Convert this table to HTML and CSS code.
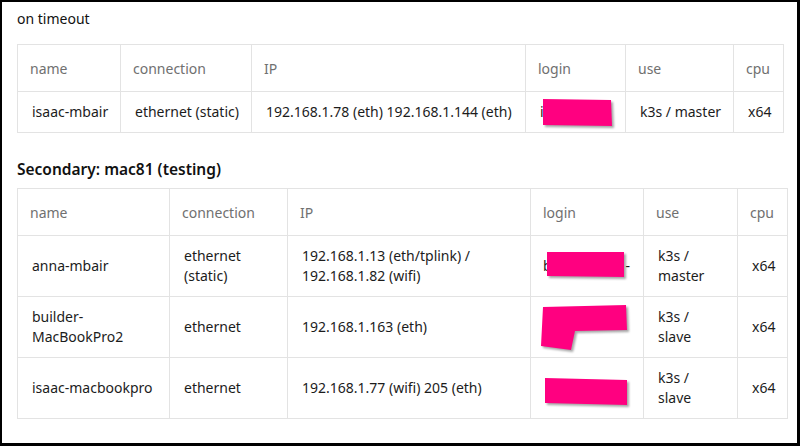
FILE: index.html
```html
<!DOCTYPE html>
<html>
<head>
<meta charset="utf-8">
<link rel="stylesheet" href="styles.css">
</head>
<body>
<div class="frame">
  <p class="intro">on timeout</p>
  <table class="grid grid-primary">
    <colgroup>
      <col class="c1a"><col class="c2a"><col class="c3a"><col class="c4a"><col class="c5a"><col class="c6a">
    </colgroup>
    <thead>
      <tr><th>name</th><th>connection</th><th>IP</th><th>login</th><th>use</th><th>cpu</th></tr>
    </thead>
    <tbody>
      <tr><td>isaac-mbair</td><td>ethernet (static)</td><td>192.168.1.78 (eth) 192.168.1.144 (eth)</td><td>isaac</td><td>k3s / master</td><td>x64</td></tr>
    </tbody>
  </table>

  <h3 class="section">Secondary: mac81 (testing)</h3>
  <table class="grid grid-secondary">
    <colgroup>
      <col class="c1b"><col class="c2b"><col class="c3b"><col class="c4b"><col class="c5b"><col class="c6b">
    </colgroup>
    <thead>
      <tr><th>name</th><th>connection</th><th>IP</th><th>login</th><th>use</th><th>cpu</th></tr>
    </thead>
    <tbody>
      <tr class="two"><td>anna-mbair</td><td>ethernet<br>(static)</td><td>192.168.1.13 (eth/tplink) /<br>192.168.1.82 (wifi)</td><td class="login-shift">b<span class="hid">xxxxxxxxxx</span>-</td><td>k3s /<br>master</td><td>x64</td></tr>
      <tr class="two"><td>builder-<br>MacBookPro2</td><td>ethernet</td><td>192.168.1.163 (eth)</td><td><span class="hid">xxxxxxxxxx</span>-</td><td>k3s /<br>slave</td><td>x64</td></tr>
      <tr class="two"><td>isaac-macbookpro</td><td>ethernet</td><td>192.168.1.77 (wifi) 205 (eth)</td><td></td><td>k3s /<br>slave</td><td>x64</td></tr>
    </tbody>
  </table>

  <svg class="redact" width="800" height="446" viewBox="0 0 800 446" aria-hidden="true">
    <g class="ink">
      <polygon points="543,99 611,100 612,126 543,125"/>
      <polygon points="547,252 624,252 624,277 547,276"/>
      <polygon points="543,307 626,305 627,330 575,331 571,350 541,346"/>
      <polygon points="545,378 627,380 627,405 545,403"/>
    </g>
  </svg>
</div>
</body>
</html>
```

FILE: styles.css
```css
html, body {
  margin: 0;
  padding: 0;
  background: #fff;
}

.frame {
  position: relative;
  box-sizing: border-box;
  width: 800px;
  height: 446px;
  border-style: solid;
  border-color: #000;
  border-width: 2px 3px 3px 2px;
  padding: 0 0 0 15px;
  font-family: "Noto Sans", "Open Sans", sans-serif;
  font-size: 14px;
  color: #1f1f1f;
  overflow: hidden;
}

.intro {
  margin: 0;
  padding-top: 7px;
  height: 35px;
  line-height: 20px;
  font-size: 14px;
  color: #111;
}

.grid {
  border-collapse: collapse;
  table-layout: fixed;
}

.grid th,
.grid td {
  border: 1px solid #e3e3e3;
  text-align: left;
  vertical-align: middle;
  line-height: 20px;
  white-space: nowrap;
  overflow: hidden;
}

.grid th {
  font-weight: normal;
  color: #707070;
  padding: 14px 12px 12px;
}

.grid td {
  padding: 10px 14px;
  color: #1c1c1c;
}

.grid td.login-shift {
  padding-left: 12px;
}

.grid-primary { width: 767px; }
.c1a { width: 103px; }
.c2a { width: 131px; }
.c3a { width: 274px; }
.c4a { width: 100px; }
.c5a { width: 108px; }
.c6a { width: 50px; }

.grid-secondary { width: 771px; }
.c1b { width: 152px; }
.c2b { width: 118px; }
.c3b { width: 243px; }
.c4b { width: 113px; }
.c5b { width: 94px; }
.c6b { width: 50px; }

.section {
  margin: 0;
  padding-top: 24px;
  height: 31px;
  box-sizing: content-box;
  line-height: 24px;
  font-size: 15.5px;
  font-weight: 600;
  color: #111;
}

.hid {
  color: transparent;
}

.redact {
  position: absolute;
  left: -2px;
  top: -2px;
  pointer-events: none;
}

.ink polygon {
  fill: #ff0080;
  filter: drop-shadow(2px 2px 1.2px rgba(0, 0, 0, 0.35));
}
```
